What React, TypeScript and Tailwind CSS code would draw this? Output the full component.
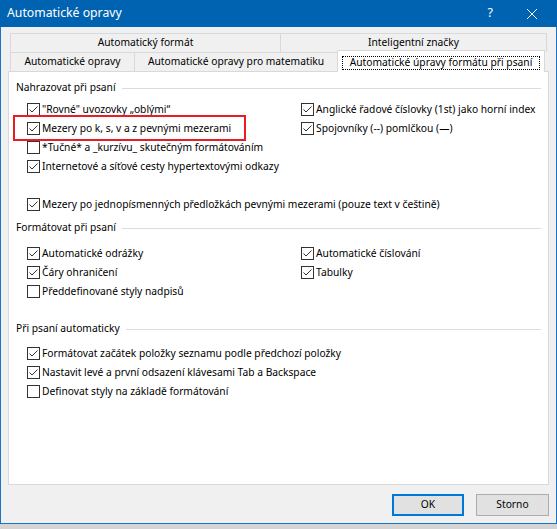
import React from "react";

const Check = ({ checked }: { checked: boolean }) => (
  <svg width="13" height="13" viewBox="0 0 13 13" className="shrink-0">
    <rect x="0.5" y="0.5" width="12" height="12" fill="white" stroke="#333333" />
    {checked && (
      <path d="M2.5 6.5 L5 9 L10.5 3.5" fill="none" stroke="#333333" strokeWidth="1" />
    )}
  </svg>
);

const Item = ({
  checked,
  label,
  children,
}: {
  checked: boolean;
  label: string;
  children?: React.ReactNode;
}) => (
  <div className="relative flex h-[19px] items-center gap-[2px] whitespace-nowrap">
    <Check checked={checked} />
    <span>{label}</span>
    {children}
  </div>
);

const Header = ({ label, className }: { label: string; className: string }) => (
  <div className={`flex h-[16px] items-center pl-[7px] pr-[7px] ${className}`}>
    <span className="whitespace-nowrap">{label}</span>
    <div className="ml-[6px] h-px flex-1 bg-[#dcdcdc]" />
  </div>
);

export default function App() {
  return (
    <div className="h-[529px] w-[557px] bg-[#d4d4d4] font-['Noto_Sans','Liberation_Sans',sans-serif] text-[10.25px] text-black">
      <div className="flex h-[524px] w-[557px] flex-col">
        {/* Title bar */}
        <div className="flex h-[27px] shrink-0 items-center bg-[#0063b1] text-[12.25px] text-white">
          <span className="ml-[7px] flex-1">Automatické opravy</span>
          <span className="mr-[34px] text-[12.5px]">?</span>
          <svg width="10" height="10" viewBox="0 0 10 10" className="mr-[20px]">
            <path d="M0 0 L10 10 M10 0 L0 10" stroke="white" strokeWidth="1" />
          </svg>
        </div>
        {/* Body */}
        <div className="flex flex-1 flex-col border-x border-b border-[#1a73c5] bg-[#f0f0f0] px-[7px] pt-[6px]">
          {/* Tab row 1 */}
          <div className="mx-[2px] flex h-[19px]">
            <div className="flex w-[270px] items-center justify-center border-l border-t border-[#d9d9d9]">
              Automatický formát
            </div>
            <div className="flex flex-1 items-center justify-center border-x border-t border-[#d9d9d9]">
              Inteligentní značky
            </div>
          </div>
          {/* Tab row 2 */}
          <div className="ml-[2px] flex h-[19px]">
            <div className="flex w-[124px] items-center justify-center border-l border-t border-[#d9d9d9]">
              Automatické opravy
            </div>
            <div className="flex w-[203px] items-center justify-center border-l border-t border-[#d9d9d9]">
              Automatické opravy pro matematiku
            </div>
            <div className="relative z-10 -mt-[2px] flex h-[22px] w-[208px] flex-col border-x border-t border-[#d9d9d9] bg-white">
              <div className="mx-[4px] mb-[2px] mt-[5px] flex h-[14px] items-center justify-center border border-dotted border-black">
                Automatické úpravy formátu při psaní
              </div>
            </div>
          </div>
          {/* Panel */}
          <div className="h-[414px] border border-[#d9d9d9] bg-white">
            <Header label="Nahrazovat při psaní" className="mt-[8px]" />
            <div className="mt-[4px] grid grid-cols-[274px_1fr] pl-[18px]">
              <Item checked label={'"Rovné" uvozovky „oblými“'} />
              <Item checked label="Anglické řadové číslovky (1st) jako horní index" />
              <Item checked label="Mezery po k, s, v a z pevnými mezerami">
                <div className="pointer-events-none absolute left-[-14px] top-[-4px] h-[26px] w-[233px] border-2 border-[#e81c24]" />
              </Item>
              <Item checked label="Spojovníky (--) pomlčkou (—)" />
              <Item checked={false} label="*Tučné* a _kurzívu_ skutečným formátováním" />
              <div />
              <Item checked label="Internetové a síťové cesty hypertextovými odkazy" />
              <div />
              <div className="col-span-2 h-[19px]" />
              <div className="col-span-2">
                <Item checked label="Mezery po jednopísmenných předložkách pevnými mezerami (pouze text v češtině)" />
              </div>
            </div>
            <Header label="Formátovat při psaní" className="mt-[6px]" />
            <div className="mt-[8px] grid grid-cols-[274px_1fr] pl-[18px]">
              <Item checked label="Automatické odrážky" />
              <Item checked label="Automatické číslování" />
              <Item checked label="Čáry ohraničení" />
              <Item checked label="Tabulky" />
              <Item checked={false} label="Předdefinované styly nadpisů" />
              <div />
            </div>
            <Header label="Při psaní automaticky" className="mt-[20px]" />
            <div className="mt-[7px] flex flex-col pl-[18px]">
              <Item checked label="Formátovat začátek položky seznamu podle předchozí položky" />
              <Item checked label="Nastavit levé a první odsazení klávesami Tab a Backspace" />
              <Item checked={false} label="Definovat styly na základě formátování" />
            </div>
          </div>
          {/* Footer */}
          <div className="mt-[9px] flex justify-end gap-[12px]">
            <button className="h-[22px] w-[72px] border-2 border-[#0078d7] bg-[#e1e1e1] text-[10.25px]">
              OK
            </button>
            <button className="h-[22px] w-[73px] border border-[#adadad] bg-[#e1e1e1] text-[10.25px]">
              Storno
            </button>
          </div>
        </div>
      </div>
    </div>
  );
}
